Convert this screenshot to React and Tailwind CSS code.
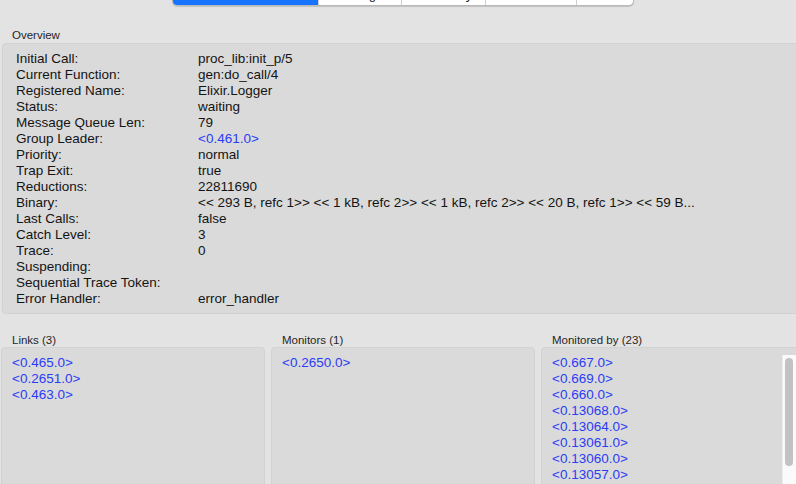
import React from "react";

const rows = [
  ["Initial Call:", "proc_lib:init_p/5"],
  ["Current Function:", "gen:do_call/4"],
  ["Registered Name:", "Elixir.Logger"],
  ["Status:", "waiting"],
  ["Message Queue Len:", "79"],
  ["Group Leader:", "<0.461.0>", true],
  ["Priority:", "normal"],
  ["Trap Exit:", "true"],
  ["Reductions:", "22811690"],
  ["Binary:", "<< 293 B, refc 1>> << 1 kB, refc 2>> << 1 kB, refc 2>> << 20 B, refc 1>> << 59 B..."],
  ["Last Calls:", "false"],
  ["Catch Level:", "3"],
  ["Trace:", "0"],
  ["Suspending:", ""],
  ["Sequential Trace Token:", ""],
  ["Error Handler:", "error_handler"],
];

const tabs = [
  ["Process Information", 146],
  ["Messages", 83],
  ["Dictionary", 84],
  ["Stack Trace", 92],
  ["State", 57],
];

const links = ["<0.465.0>", "<0.2651.0>", "<0.463.0>"];
const monitors = ["<0.2650.0>"];
const monitoredBy = [
  "<0.667.0>", "<0.669.0>", "<0.660.0>", "<0.13068.0>", "<0.13064.0>",
  "<0.13061.0>", "<0.13060.0>", "<0.13057.0>", "<0.13055.0>",
];

function Section({ title, items, scroll }) {
  return (
    <div className="flex flex-col min-w-0">
      <div className="h-[13px] pl-[11px] text-[11.5px] leading-[13px] text-[#262626]">{title}</div>
      <div className="relative h-[150px] rounded-[4px] border border-[#d2d2d2] bg-[#dadada] pt-[7px] pl-[10px]">
        {items.map((t) => (
          <div key={t} className="h-[16px] text-[13.5px] leading-[16px] text-[#2a3cf5]">{t}</div>
        ))}
        {scroll && (
          <div className="absolute right-[1px] top-[7px] bottom-0 w-[17px] bg-[#fafafa] border-l border-[#ececec]">
            <div className="ml-[2px] mt-[3px] h-[108px] w-[8px] rounded-full bg-[#c2c2c2]" />
          </div>
        )}
      </div>
    </div>
  );
}

export default function App() {
  return (
    <div
      className="relative w-[796px] h-[484px] overflow-hidden bg-[#e3e3e3]"
      style={{ fontFamily: '"Liberation Sans", Arial, sans-serif' }}
    >
      <div className="ml-[172px] mt-[-16px] flex h-[22px] w-[462px] overflow-hidden rounded-[5px] border border-[#b9b9b9] bg-white shadow-[0_1px_1px_rgba(0,0,0,0.15)]">
        {tabs.map(([t, w], i) => (
          <div
            key={t}
            style={{ width: w }}
            className={
              i === 0
                ? "flex items-center justify-center bg-[#1674fe] text-[13px] text-white"
                : "flex items-center justify-center border-l border-[#cfcfcf] text-[13px] text-[#222]"
            }
          >
            {t}
          </div>
        ))}
      </div>

      <div className="mt-[23px] h-[13px] pl-[12px] text-[11.5px] leading-[13px] text-[#262626]">Overview</div>
      <div className="ml-[2px] mt-[1px] h-[271px] w-[800px] rounded-[4px] border border-[#d2d2d2] bg-[#dadada] pt-[7px] pl-[13px]">
        {rows.map(([k, v, link]) => (
          <div key={k} className="flex h-[16px] text-[13.5px] leading-[16px] text-[#141414]">
            <div className="w-[182px] shrink-0">{k}</div>
            <div className={link ? "text-[#2a3cf5] whitespace-nowrap" : "whitespace-nowrap"}>{v}</div>
          </div>
        ))}
      </div>

      <div className="mt-[20px] grid grid-cols-[264px_264px_260px] gap-x-[6px] pl-[1px]">
        <Section title="Links (3)" items={links} />
        <Section title="Monitors (1)" items={monitors} />
        <Section title="Monitored by (23)" items={monitoredBy} scroll />
      </div>
    </div>
  );
}
